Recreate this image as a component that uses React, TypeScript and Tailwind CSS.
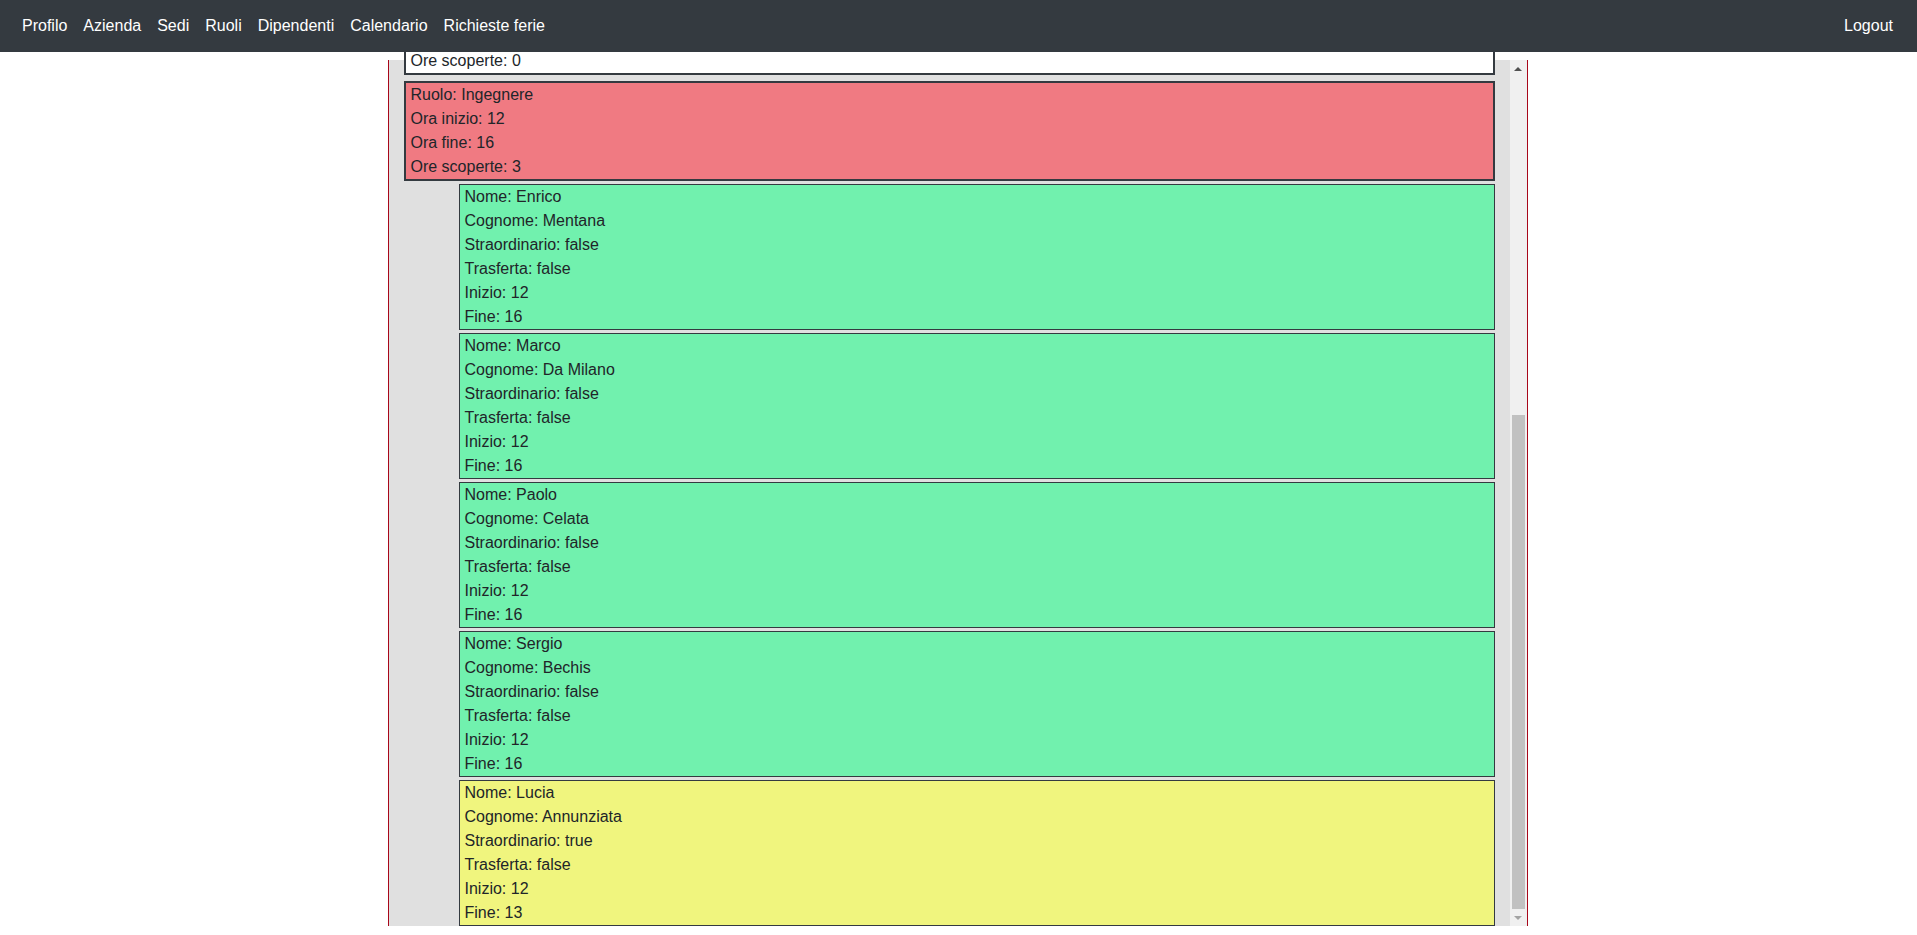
import React from "react";

type Employee = {
  nome: string;
  cognome: string;
  straordinario: boolean;
  trasferta: boolean;
  inizio: number;
  fine: number;
};

const employees: Employee[] = [
  { nome: "Enrico", cognome: "Mentana", straordinario: false, trasferta: false, inizio: 12, fine: 16 },
  { nome: "Marco", cognome: "Da Milano", straordinario: false, trasferta: false, inizio: 12, fine: 16 },
  { nome: "Paolo", cognome: "Celata", straordinario: false, trasferta: false, inizio: 12, fine: 16 },
  { nome: "Sergio", cognome: "Bechis", straordinario: false, trasferta: false, inizio: 12, fine: 16 },
  { nome: "Lucia", cognome: "Annunziata", straordinario: true, trasferta: false, inizio: 12, fine: 13 },
];

const links = ["Profilo", "Azienda", "Sedi", "Ruoli", "Dipendenti", "Calendario", "Richieste ferie"];

function EmployeeCard({ emp }: { emp: Employee }) {
  // straordinario -> giallo, altrimenti verde
  const bg = emp.straordinario ? "bg-[#f0f57e]" : "bg-[#71f1ae]";
  return (
    <div className={`ml-[55px] mt-[3px] border border-[#343a40] px-[5px] ${bg}`}>
      <div>Nome: {emp.nome}</div>
      <div>Cognome: {emp.cognome}</div>
      <div>Straordinario: {String(emp.straordinario)}</div>
      <div>Trasferta: {String(emp.trasferta)}</div>
      <div>Inizio: {emp.inizio}</div>
      <div>Fine: {emp.fine}</div>
    </div>
  );
}

function Triangle({ up, color }: { up: boolean; color: string }) {
  return (
    <svg width="8" height="4" viewBox="0 0 8 4">
      <polygon points={up ? "0,4 4,0 8,4" : "0,0 8,0 4,4"} fill={color} />
    </svg>
  );
}

export default function App() {
  return (
    <div className="min-h-screen bg-white font-['Segoe_UI','Liberation_Sans',sans-serif] text-base leading-6 text-[#212529]">
      <nav className="flex h-[52px] items-center justify-between bg-[#343a40] pl-[14px] pr-4 text-white">
        <div className="flex items-center">
          {links.map((l) => (
            <a key={l} href="#" className="whitespace-nowrap px-2">
              {l}
            </a>
          ))}
        </div>
        <a href="#" className="px-2">
          Logout
        </a>
      </nav>

      <div className="h-[874px] overflow-hidden">
        <div className="relative right-[1px] mx-auto mt-2 flex h-[866px] w-[1140px] border-x border-[#a8071a] bg-[#e0e0e0]">
          <div className="flex flex-1 flex-col justify-end px-[15px]">
            <div className="border-2 border-[#343a40] bg-white px-[5px]">
              <div>Ore scoperte: 0</div>
            </div>
            <div className="mt-[6px]">
              <div className="border-2 border-[#343a40] bg-[#f07a82] px-[5px]">
                <div>Ruolo: Ingegnere</div>
                <div>Ora inizio: 12</div>
                <div>Ora fine: 16</div>
                <div>Ore scoperte: 3</div>
              </div>
              {employees.map((e) => (
                <EmployeeCard key={e.nome} emp={e} />
              ))}
            </div>
          </div>
          <div className="flex w-[17px] flex-col bg-[#f0f0f0]">
            <div className="flex h-[17px] items-center justify-center">
              <Triangle up color="#505050" />
            </div>
            <div className="flex flex-1 flex-col justify-end">
              <div className="mx-[2px] h-[494px] bg-[#c1c1c1]" />
            </div>
            <div className="flex h-[17px] items-center justify-center">
              <Triangle up={false} color="#a3a3a3" />
            </div>
          </div>
        </div>
      </div>
    </div>
  );
}
